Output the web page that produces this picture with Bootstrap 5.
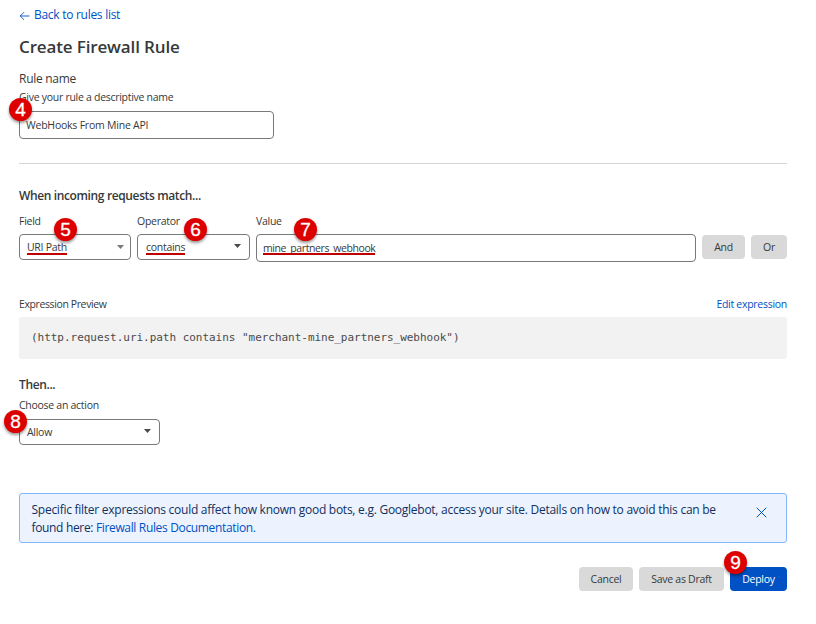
<!DOCTYPE html>
<html lang="en">
<head>
<meta charset="utf-8">
<meta name="viewport" content="width=device-width, initial-scale=1">
<title>Create Firewall Rule</title>
<link href="https://cdn.jsdelivr.net/npm/bootstrap@5.3.0/dist/css/bootstrap.min.css" rel="stylesheet">
<style>
  body { font-family: "Open Sans", "Noto Sans", sans-serif; font-size: 10.5px; line-height: 16px; letter-spacing: -.28px; color: #36393a; background: #fff; overflow: hidden; }
  a { color: #0051c3; }
  .page { width: 768px; margin-left: 19px; padding-top: 6px; }
  .back-link { font-size: 12px; line-height: 18px; height: 18px; gap: 4px; }
  h1 { font-size: 17px; line-height: 24px; font-weight: 600; letter-spacing: -.14px; margin: 11px 0 0; }
  h2 { font-size: 12px; line-height: 20px; font-weight: 600; letter-spacing: -.37px; margin: 0; }
  .name-label { font-size: 12px; line-height: 18px; margin-top: 11px; }
  .helper { margin-top: 1px; }
  .form-control, .picker { font-size: 10.5px; line-height: 16px; color: #36393a; border: 1px solid #797979; border-radius: 4px; background: #fff; }
  .form-control { height: 28px; padding: 0 6px; }
  .picker { height: 26px; padding: 0 8px 0 7px; }
  .name-box { width: 255px; margin-top: 6px; }
  .t-web { letter-spacing: -.22px; }
  .divider { height: 1px; background: #d5d5d5; margin-top: 24px; }
  .caret { width: 7px; height: 4px; display: block; margin-bottom: 2px; }
  .field-col { width: 112px; }
  .field-col .picker { padding-right: 6px; }
  .field-col .caret { margin-bottom: 0; }
  .operator-col { width: 113px; }
  .operator-col .picker { padding-left: 8px; }
  .value-col { width: 440px; }
  .control { margin-top: 5px; }
  .underlined { position: relative; }
  .underlined::after { content: ""; position: absolute; left: 0; right: 0; bottom: 0; height: 2px; background: #c00000; }
  .t-mine { letter-spacing: -.4px; }
  .t-mine::after { bottom: 1px; }
  .t-prev { letter-spacing: -.39px; }
  .btn { font-size: 10.5px; line-height: 16px; letter-spacing: inherit; height: 24px; padding: 0; border: 0; border-radius: 4px; }
  .btn-grey, .btn-grey:hover { background: #d9d9d9; color: #36393a; }
  .btn-deploy, .btn-deploy:hover { background: #0051c3; color: #fff; width: 57px; }
  .code-box { font-family: "DejaVu Sans Mono", monospace; font-size: 11px; letter-spacing: -.03px; height: 42px; background: #f2f2f2; border-radius: 3px; padding: 0 0 0 12px; margin-top: 5px; color: #4a4a4a; }
  .notice { height: 50px; margin-top: 48px; background: #ecf3ff; border: 1px solid #82b6ff; border-radius: 3px; color: #10305f; padding: 7px 19px 0 11.5px; font-size: 12px; line-height: 18px; letter-spacing: -.26px; }
  .t-n2 { letter-spacing: -.34px; }
  .step { position: absolute; width: 23px; height: 23px; border-radius: 50%; background: #dd0000; color: #fff; font: 19px/23px "Liberation Sans", sans-serif; letter-spacing: 0; -webkit-text-stroke: .3px #fff; text-align: center; box-shadow: 0 2px 3px rgba(0,0,0,.4); z-index: 2; }
</style>
<script src="https://cdn.jsdelivr.net/npm/bootstrap@5.3.0/dist/js/bootstrap.bundle.min.js"></script>
</head>
<body>
<main class="page">
  <a href="#" class="back-link d-flex align-items-center text-decoration-none">
    <svg width="11" height="9" viewBox="0 0 11 9" fill="none" stroke="currentColor" stroke-width=".9"><path d="M10.5 5H1.2M5 1.2 1.2 5 5 8.8"/></svg>
    <span>Back to rules list</span>
  </a>
  <h1>Create Firewall Rule</h1>
  <div class="name-label">Rule name</div>
  <div class="helper">Give your rule a descriptive name</div>
  <div class="name-box position-relative">
    <div class="form-control d-flex align-items-center"><span class="t-web">WebHooks From Mine API</span></div>
    <span class="step" style="left:-10px;top:-13px">4</span>
  </div>
  <div class="divider"></div>

  <h2 style="margin-top:22px">When incoming requests match...</h2>
  <div class="d-flex" style="margin-top:7px">
    <div class="field-col position-relative">
      <span class="d-block">Field</span>
      <div class="picker control d-flex align-items-center justify-content-between">
        <span class="underlined">URI Path</span>
        <svg class="caret" viewBox="0 0 7 4"><path d="M0 0h7L3.5 4z" fill="#797979"/></svg>
      </div>
      <span class="step" style="left:35px;top:5px">5</span>
    </div>
    <div class="operator-col position-relative" style="margin-left:6px">
      <span class="d-block">Operator</span>
      <div class="picker control d-flex align-items-center justify-content-between">
        <span class="underlined">contains</span>
        <svg class="caret" viewBox="0 0 7 4"><path d="M0 0h7L3.5 4z" fill="#4a4a4a"/></svg>
      </div>
      <span class="step" style="left:47px;top:5px">6</span>
    </div>
    <div class="value-col position-relative" style="margin-left:6px">
      <span class="d-block">Value</span>
      <div class="form-control control d-flex align-items-center"><span class="underlined t-mine">mine_partners_webhook</span></div>
      <span class="step" style="left:38px;top:5px">7</span>
    </div>
    <div class="d-flex" style="margin-top:22px;margin-left:6px;gap:6px">
      <button class="btn btn-grey" style="width:43px">And</button>
      <button class="btn btn-grey" style="width:36px">Or</button>
    </div>
  </div>

  <div class="d-flex justify-content-between" style="margin-top:34px">
    <span class="t-prev">Expression Preview</span>
    <a href="#" class="text-decoration-none">Edit expression</a>
  </div>
  <div class="code-box d-flex align-items-center">(http.request.uri.path contains "merchant-mine_partners_webhook")</div>

  <h2 style="margin-top:16px">Then...</h2>
  <div style="margin-top:2px">Choose an action</div>
  <div class="position-relative" style="width:141px;margin-top:6px">
    <div class="picker d-flex align-items-center justify-content-between">
      <span>Allow</span>
      <svg class="caret" viewBox="0 0 7 4"><path d="M0 0h7L3.5 4z" fill="#4a4a4a"/></svg>
    </div>
    <span class="step" style="left:-15px;top:-9px">8</span>
  </div>

  <div class="notice d-flex justify-content-between">
    <div>
      <span>Specific filter expressions could affect how known good bots, e.g. Googlebot, access your site. Details on how to avoid this can be</span><br>
      <span class="t-n2">found here: <a href="#" class="text-decoration-none">Firewall Rules Documentation.</a></span>
    </div>
    <svg class="flex-shrink-0" style="margin-top:6px" width="11" height="11" viewBox="0 0 11 11" fill="none" stroke="#0051c3"><path d="M.7.7l9.6 9.6M10.3.7.7 10.3"/></svg>
  </div>

  <div class="d-flex justify-content-end" style="margin-top:24px;gap:6px">
    <button class="btn btn-grey" style="width:54px">Cancel</button>
    <button class="btn btn-grey" style="width:85px">Save as Draft</button>
    <div class="position-relative">
      <button class="btn btn-deploy d-block">Deploy</button>
      <span class="step" style="left:-6px;top:-16px">9</span>
    </div>
  </div>
</main>
</body>
</html>
